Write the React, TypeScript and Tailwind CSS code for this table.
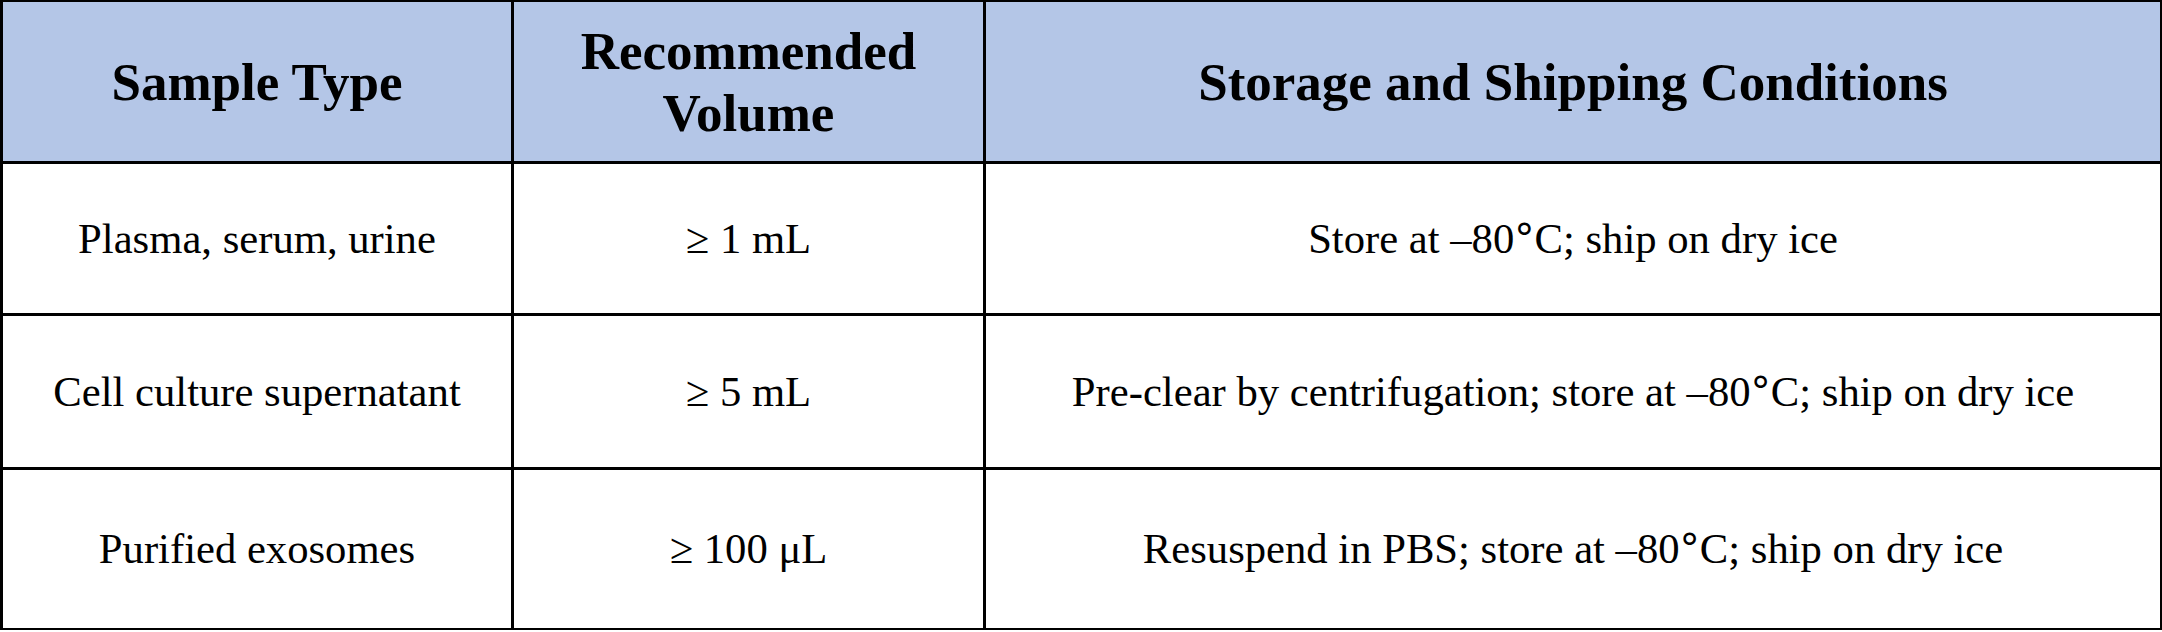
import React from "react";

const rows = [
  ["Plasma, serum, urine", "≥ 1 mL", "Store at –80°C; ship on dry ice"],
  ["Cell culture supernatant", "≥ 5 mL", "Pre-clear by centrifugation; store at –80°C; ship on dry ice"],
  ["Purified exosomes", "≥ 100 μL", "Resuspend in PBS; store at –80°C; ship on dry ice"],
];

const headers = ["Sample Type", "Recommended Volume", "Storage and Shipping Conditions"];

// the degree sign in the source is a heavier, larger glyph than Times' own
function Cell({ text }: { text: string }) {
  const parts = text.split("°");
  if (parts.length === 1) return <>{text}</>;
  return (
    <>
      {parts[0]}
      <span className="font-['DejaVu_Sans',sans-serif] text-[0.95em] leading-none">°</span>
      {parts[1]}
    </>
  );
}

export default function App() {
  return (
    <div className="w-[2162px] h-[632px] bg-white font-['Liberation_Serif',serif] text-black">
      <div className="grid grid-cols-[508px_469px_1174px] grid-rows-[159px_149px_151px_158px] gap-[3px] bg-black pt-[2px] pl-[3px] pr-[2px] pb-[2px] w-[2162px]">
        {/* Header */}
        {headers.map((h) => (
          <div
            key={h}
            className="bg-[#b4c6e7] flex items-center justify-center text-center font-bold text-[53px] leading-[62px] px-8"
          >
            {h === "Recommended Volume" ? (
              <span>
                Recommended
                <br />
                Volume
              </span>
            ) : (
              h
            )}
          </div>
        ))}

        {/* Body rows */}
        {rows.map((row) =>
          row.map((cell, i) => (
            <div
              key={row[0] + i}
              className="bg-white flex items-center justify-center text-center text-[42.67px] leading-[50px]"
            >
              <span>
                <Cell text={cell} />
              </span>
            </div>
          ))
        )}
      </div>
    </div>
  );
}
